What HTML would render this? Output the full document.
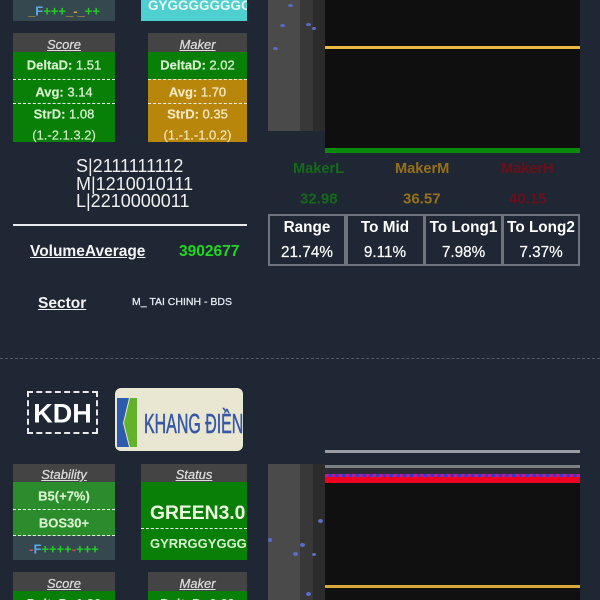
<!DOCTYPE html>
<html><head><meta charset="utf-8">
<style>
html,body{margin:0;padding:0;background:#1e2733;}
#p{position:relative;width:600px;height:600px;overflow:hidden;background:#1e2733;font-family:"Liberation Sans",sans-serif;color:#fff;}
.a{position:absolute;}
.t{position:absolute;text-align:center;white-space:nowrap;font-weight:bold;transform:translateY(calc(-50% + 1px));}
.n{font-weight:normal;-webkit-text-stroke:.3px currentColor;}
.h{background:#444;color:#ddd;font-style:italic;text-decoration:underline;font-weight:normal;font-size:13px;text-align:center;-webkit-text-stroke:.25px #ddd;}
.c{position:absolute;border:2px solid #6f757d;box-sizing:border-box;}
.d{position:absolute;width:5px;height:3px;border-radius:50%;background:#5a6cc8;}
.dash{position:absolute;border-top:1.5px dashed #e6efe6;height:0;}
.r{font-size:13px;-webkit-text-stroke:.15px currentColor;}
</style></head><body><div id="p">

<!-- top row remnants -->
<div class="a" style="left:13px;top:0;width:102px;height:21px;background:#35474f;"></div>
<div class="t" style="left:13px;top:10px;width:102px;font-size:13px;"><span style="color:#e0a030">_</span><span style="color:#5aa8e8">F</span><span style="color:#22d022">+++</span><span style="color:#e0a030">_</span><span style="color:#d0a030">-</span><span style="color:#e0a030">_</span><span style="color:#22d022">++</span></div>
<div class="a" style="left:141px;top:0;width:106px;height:21px;background:#4fd0d0;overflow:hidden;"><div style="position:absolute;left:7px;top:-2px;font-size:13.5px;font-weight:bold;color:#e8f6f0;white-space:nowrap;">GYGGGGGGGG</div></div>

<!-- Score -->
<div class="a h" style="left:13px;top:33px;width:102px;height:19px;line-height:23px;">Score</div>
<div class="a" style="left:13px;top:52px;width:102px;height:90px;background:#088008;"></div>
<div class="dash" style="left:13px;top:78.5px;width:102px;"></div>
<div class="dash" style="left:13px;top:103px;width:102px;"></div>
<div class="t r" style="left:13px;top:64px;width:102px;color:#d8f0d0;">DeltaD: <span class="n">1.51</span></div>
<div class="t r" style="left:13px;top:91px;width:102px;color:#d8f0d0;">Avg: <span class="n">3.14</span></div>
<div class="t r" style="left:13px;top:113px;width:102px;color:#d8f0d0;">StrD: <span class="n">1.08</span></div>
<div class="t r n" style="left:13px;top:134px;width:102px;color:#d8f0d0;">(1.-2.1.3.2)</div>

<!-- Maker -->
<div class="a h" style="left:148px;top:33px;width:99px;height:19px;line-height:23px;">Maker</div>
<div class="a" style="left:148px;top:52px;width:99px;height:27px;background:#088008;"></div>
<div class="a" style="left:148px;top:79px;width:99px;height:63px;background:#b8860b;"></div>
<div class="dash" style="left:148px;top:78.5px;width:99px;"></div>
<div class="dash" style="left:148px;top:103px;width:99px;"></div>
<div class="t r" style="left:148px;top:64px;width:99px;color:#d8f0d0;">DeltaD: <span class="n">2.02</span></div>
<div class="t r" style="left:148px;top:91px;width:99px;color:#f4e8c0;">Avg: <span class="n">1.70</span></div>
<div class="t r" style="left:148px;top:113px;width:99px;color:#f4e8c0;">StrD: <span class="n">0.35</span></div>
<div class="t r n" style="left:148px;top:134px;width:99px;color:#f4e8c0;">(1.-1.-1.0.2)</div>

<!-- S M L -->
<div class="a" style="left:76px;top:158px;font-size:18px;line-height:17.7px;color:#f0f0f0;white-space:nowrap;">S|2111111112<br>M|1210010111<br>L|2210000011</div>

<div class="a" style="left:13px;top:223.5px;width:234px;height:2px;background:#e8ebee;"></div>

<div class="t" style="left:30px;top:251px;font-size:15.5px;text-decoration:underline;color:#f4f4f4;">VolumeAverage</div>
<div class="t" style="left:179px;top:251px;font-size:15.5px;color:#1fd81f;">3902677</div>
<div class="t" style="left:38px;top:303px;font-size:15.5px;text-decoration:underline;color:#f4f4f4;">Sector</div>
<div class="t" style="left:132px;top:301px;font-size:10.5px;font-weight:normal;color:#e8ecf4;-webkit-text-stroke:.25px #e8ecf4;">M_ TAI CHINH - BDS</div>

<div class="a" style="left:0;top:358px;width:600px;border-top:1px dashed #555b63;"></div>

<!-- KDH -->
<div class="a" style="left:27px;top:391px;width:71px;height:43px;border:2px dashed #e8e8e8;box-sizing:border-box;"></div>
<div class="t" style="left:27px;top:413px;width:71px;font-size:27px;color:#fff;">KDH</div>

<!-- Logo -->
<div class="a" style="left:115px;top:388px;width:128px;height:63px;background:#e9e7d2;border-radius:6px;overflow:hidden;">
<svg class="a" style="left:0;top:0" width="128" height="63" viewBox="0 0 128 63">
<path d="M2 10H14L8 35L14 59H2Z" fill="#2d5bb0"/>
<path d="M15 10H22V59H15L9 35Z" fill="#62b32a"/>
</svg>
<div class="a" style="left:29px;top:20px;font-size:28px;line-height:32px;font-weight:normal;color:#3558a8;white-space:nowrap;transform:scaleX(.57);transform-origin:0 0;-webkit-text-stroke:.6px #3558a8;">KHANG ĐIỀN</div>
</div>

<!-- Stability -->
<div class="a h" style="left:13px;top:464px;width:102px;height:18px;line-height:22px;">Stability</div>
<div class="a" style="left:13px;top:482px;width:102px;height:54px;background:#2b8c2b;"></div>
<div class="a" style="left:13px;top:536px;width:102px;height:24px;background:#35474f;"></div>
<div class="dash" style="left:13px;top:508.5px;width:102px;"></div>
<div class="dash" style="left:13px;top:534.5px;width:102px;"></div>
<div class="t r" style="left:13px;top:495px;width:102px;color:#d8f0d0;">B5(+7%)</div>
<div class="t r" style="left:13px;top:522px;width:102px;color:#d8f0d0;">BOS30+</div>
<div class="t" style="left:13px;top:548px;width:102px;font-size:13px;"><span style="color:#d05050">-</span><span style="color:#5aa8e8">F</span><span style="color:#22d022">++++</span><span style="color:#d05050">-</span><span style="color:#22d022">+++</span></div>

<!-- Status -->
<div class="a h" style="left:141px;top:464px;width:106px;height:18px;line-height:22px;">Status</div>
<div class="a" style="left:141px;top:482px;width:106px;height:78px;background:#088008;overflow:hidden;">
<div style="position:absolute;left:9px;top:21px;font-size:19.3px;line-height:22px;font-weight:bold;color:#eef6e0;white-space:nowrap;">GREEN3.0</div>
<div style="position:absolute;left:9px;top:54px;font-size:13px;line-height:16px;font-weight:bold;color:#d8f0d0;white-space:nowrap;">GYRRGGYGGG</div>
</div>
<div class="dash" style="left:141px;top:527.5px;width:106px;"></div>

<!-- second Score / Maker -->
<div class="a h" style="left:13px;top:572px;width:102px;height:19px;line-height:23px;">Score</div>
<div class="a" style="left:13px;top:591px;width:102px;height:9px;background:#088008;overflow:hidden;"><div style="position:absolute;left:0;width:102px;top:5px;text-align:center;font-size:13px;line-height:15px;font-weight:bold;color:#d8f0d0;">DeltaD: 1.80</div></div>
<div class="a h" style="left:148px;top:572px;width:99px;height:19px;line-height:23px;">Maker</div>
<div class="a" style="left:148px;top:591px;width:99px;height:9px;background:#088008;overflow:hidden;"><div style="position:absolute;left:0;width:99px;top:5px;text-align:center;font-size:13px;line-height:15px;font-weight:bold;color:#d8f0d0;">DeltaD: 0.69</div></div>

<!-- Chart 1 -->
<div class="a" style="left:268px;top:0;width:32px;height:131px;background:#4a4a4a;"></div>
<div class="a" style="left:300px;top:0;width:13px;height:131px;background:#383838;"></div>
<div class="a" style="left:313px;top:0;width:12px;height:131px;background:#2b2b2b;"></div>
<div class="a" style="left:325px;top:0;width:255px;height:148px;background:#0f0f0f;"></div>
<div class="a" style="left:325px;top:46px;width:255px;height:2.5px;background:#e8b840;"></div>
<div class="a" style="left:325px;top:148px;width:255px;height:5px;background:#0a8a0a;"></div>
<div class="d" style="left:288px;top:4px;"></div>
<div class="d" style="left:280px;top:24px;"></div>
<div class="d" style="left:306px;top:23px;"></div>
<div class="d" style="left:312px;top:27px;width:4px;"></div>
<div class="d" style="left:273px;top:47px;"></div>

<!-- Maker labels -->
<div class="t" style="left:293px;top:168px;font-size:14.6px;color:#156a1a;">MakerL</div>
<div class="t" style="left:395px;top:168px;font-size:14.6px;color:#96701a;">MakerM</div>
<div class="t" style="left:501px;top:168px;font-size:14.6px;color:#6d0f18;">MakerH</div>
<div class="t" style="left:300px;top:198px;font-size:15px;color:#156a1a;">32.98</div>
<div class="t" style="left:403px;top:198px;font-size:15px;color:#96701a;">36.57</div>
<div class="t" style="left:509px;top:198px;font-size:15px;color:#6d0f18;">40.15</div>

<!-- Table -->
<div class="c" style="left:268px;top:214px;width:78px;height:52px;"></div>
<div class="c" style="left:346px;top:214px;width:79px;height:52px;"></div>
<div class="c" style="left:424px;top:214px;width:79px;height:52px;"></div>
<div class="c" style="left:502px;top:214px;width:78px;height:52px;"></div>
<div class="t" style="left:268px;top:227px;width:78px;font-size:15.3px;">Range</div>
<div class="t" style="left:346px;top:227px;width:78px;font-size:15.3px;">To Mid</div>
<div class="t" style="left:424px;top:227px;width:79px;font-size:15.3px;">To Long1</div>
<div class="t" style="left:502px;top:227px;width:78px;font-size:15.3px;">To Long2</div>
<div class="t" style="left:268px;top:252px;width:78px;font-size:15.3px;font-weight:normal;-webkit-text-stroke:.2px #fff;">21.74%</div>
<div class="t" style="left:346px;top:252px;width:78px;font-size:15.3px;font-weight:normal;-webkit-text-stroke:.2px #fff;">9.11%</div>
<div class="t" style="left:424px;top:252px;width:79px;font-size:15.3px;font-weight:normal;-webkit-text-stroke:.2px #fff;">7.98%</div>
<div class="t" style="left:502px;top:252px;width:78px;font-size:15.3px;font-weight:normal;-webkit-text-stroke:.2px #fff;">7.37%</div>

<!-- Chart 2 -->
<div class="a" style="left:325px;top:450px;width:255px;height:3px;background:#9a9ea2;"></div>
<div class="a" style="left:268px;top:464px;width:32px;height:136px;background:#4a4a4a;"></div>
<div class="a" style="left:300px;top:464px;width:13px;height:136px;background:#383838;"></div>
<div class="a" style="left:313px;top:464px;width:12px;height:136px;background:#2b2b2b;"></div>
<div class="a" style="left:325px;top:468px;width:255px;height:132px;background:#101010;"></div>
<div class="a" style="left:325px;top:465px;width:255px;height:3px;background:#7c7f82;"></div>
<div class="a" style="left:325px;top:468px;width:255px;height:6px;background:#2b2b33;"></div>
<div class="a" style="left:325px;top:474px;width:255px;height:3px;background:repeating-linear-gradient(90deg,#c01890 0 3.4px,#3a3ac8 3.4px 6.8px);"></div>
<div class="a" style="left:325px;top:477px;width:255px;height:6px;background:#f00020;"></div>
<div class="a" style="left:325px;top:585px;width:255px;height:2.5px;background:#d8a838;"></div>
<div class="d" style="left:268px;top:538px;width:4px;height:4px;"></div>
<div class="d" style="left:318px;top:519px;height:4px;"></div>
<div class="d" style="left:300px;top:543px;height:4px;"></div>
<div class="d" style="left:293px;top:552px;height:4px;"></div>
<div class="d" style="left:312px;top:553px;width:4px;"></div>
<div class="d" style="left:306px;top:592px;height:4px;"></div>

</div></body></html>
